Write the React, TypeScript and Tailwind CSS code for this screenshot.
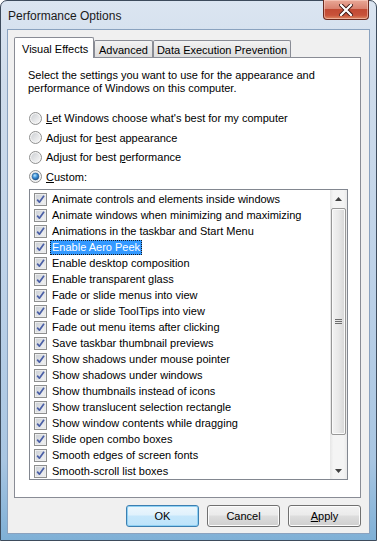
import React from "react";

const items = [
  "Animate controls and elements inside windows",
  "Animate windows when minimizing and maximizing",
  "Animations in the taskbar and Start Menu",
  "Enable Aero Peek",
  "Enable desktop composition",
  "Enable transparent glass",
  "Fade or slide menus into view",
  "Fade or slide ToolTips into view",
  "Fade out menu items after clicking",
  "Save taskbar thumbnail previews",
  "Show shadows under mouse pointer",
  "Show shadows under windows",
  "Show thumbnails instead of icons",
  "Show translucent selection rectangle",
  "Show window contents while dragging",
  "Slide open combo boxes",
  "Smooth edges of screen fonts",
  "Smooth-scroll list boxes",
];

function CheckBox() {
  return (
    <svg width="13" height="13" viewBox="0 0 13 13" className="shrink-0">
      <defs>
        <linearGradient id="cbg" x1="0" y1="0" x2="1" y2="1">
          <stop offset="0" stopColor="#cbcfd5" />
          <stop offset="1" stopColor="#f6f6f6" />
        </linearGradient>
      </defs>
      <rect x="0.5" y="0.5" width="12" height="12" fill="#f4f4f4" stroke="#8e8f8f" />
      <rect x="2" y="2" width="9" height="9" fill="url(#cbg)" stroke="#d6d9de" strokeWidth="0.6" />
      <path d="M3.2 6.6 L5.4 9.2 L10 2.8" fill="none" stroke="#4a5fa6" strokeWidth="1.7" strokeLinejoin="round" />
    </svg>
  );
}

function Radio({ checked = false }: { checked?: boolean }) {
  return (
    <svg width="13" height="13" viewBox="0 0 13 13" className="shrink-0">
      <defs>
        <linearGradient id="rbg" x1="0" y1="0" x2="1" y2="1">
          <stop offset="0" stopColor="#cdd0d4" />
          <stop offset="1" stopColor="#f7f7f7" />
        </linearGradient>
        <radialGradient id="rdot" cx="0.4" cy="0.35" r="0.7">
          <stop offset="0" stopColor="#b8e4fc" />
          <stop offset="0.5" stopColor="#3a8fd8" />
          <stop offset="1" stopColor="#194e86" />
        </radialGradient>
      </defs>
      <circle cx="6.5" cy="6.5" r="6" fill="#f4f4f4" stroke="#8e8f8f" />
      <circle cx="6.5" cy="6.5" r="4.4" fill="url(#rbg)" />
      {checked && <circle cx="6.5" cy="6.5" r="3.4" fill="url(#rdot)" stroke="#1d4f82" strokeWidth="0.5" />}
    </svg>
  );
}

function RadioRow({ children, checked }: { children: React.ReactNode; checked?: boolean }) {
  return (
    <div className="flex h-[19.5px] items-center gap-[4px]">
      <Radio checked={checked} />
      <span>{children}</span>
    </div>
  );
}

function Button({ children, primary }: { children: React.ReactNode; primary?: boolean }) {
  return (
    <div
      className={
        primary
          ? "flex h-[22px] w-[73px] items-center justify-center rounded-[3px] border border-[#3c7fb1] bg-[linear-gradient(#ecf7fd_0%,#e0f1fc_45%,#c6e7fb_50%,#bde3fa_100%)] shadow-[inset_0_0_0_1px_#8fd1f4]"
          : "flex h-[22px] w-[73px] items-center justify-center rounded-[3px] border border-[#707070] bg-[linear-gradient(#f2f2f2_0%,#ebebeb_45%,#dddddd_50%,#cfcfcf_100%)] shadow-[inset_0_0_0_1px_#fcfcfc]"
      }
    >
      {children}
    </div>
  );
}

export default function App() {
  return (
    <div className="h-[541px] w-[377px] overflow-hidden bg-white font-['Liberation_Sans',Arial,sans-serif] text-[11px] text-black">
      <div className="flex h-full w-full flex-col rounded-t-[7px] border border-[#3d4b5c] bg-[linear-gradient(#dbe5f1_0%,#cfdceb_15%,#bed2e8_50%,#a9c6e2_85%,#7fb0d6_100%)] px-[7px] pb-[7px]">
        {/* title bar */}
        <div className="flex h-[29px] shrink-0 items-start justify-between">
          <div className="mt-[8px] text-[12px] leading-[14px] text-[#1a1a1a]">Performance Options</div>
          <div className="-mt-px flex h-[20px] w-[46px] items-center justify-center rounded-b-[4px] border border-t-0 border-[#6b2a1f] bg-[linear-gradient(#e9a897_0%,#d98270_45%,#c24a33_50%,#c8523a_80%,#de8a63_100%)] shadow-[inset_0_0_0_1px_rgba(255,220,210,0.5)]">
            <svg width="14" height="12" viewBox="0 0 14 12">
              <path d="M2 1 L12 11 M12 1 L2 11" stroke="#3b1510" strokeWidth="4" strokeLinecap="square" />
              <path d="M2 1 L12 11 M12 1 L2 11" stroke="#ffffff" strokeWidth="2.2" strokeLinecap="square" />
            </svg>
          </div>
        </div>

        {/* client */}
        <div className="flex flex-1 flex-col bg-[#f0f0f0] pl-[6px] pr-[8px] pt-[7px] shadow-[0_0_0_1px_#8aa2bf]">
          {/* tabs */}
          <div className="-mb-px flex h-[21px] items-end">
            <div className="relative z-10 flex h-[21px] w-[80px] items-start rounded-t-[2px] border border-b-0 border-[#898c95] bg-white pl-[7px] pt-[3px]">
              Visual Effects
            </div>
            <div className="flex h-[18px] w-[59px] items-center justify-center rounded-t-[2px] border border-b-0 border-[#898c95] bg-[linear-gradient(#f3f3f3,#e6e6e6_50%,#dcdcdc)] pt-px">
              Advanced
            </div>
            <div className="flex h-[18px] w-[138px] items-center justify-center rounded-t-[2px] border border-b-0 border-[#898c95] bg-[linear-gradient(#f3f3f3,#e6e6e6_50%,#dcdcdc)] pt-px">
              Data Execution Prevention
            </div>
          </div>

          {/* panel */}
          <div className="flex h-[441px] flex-col border border-[#898c95] bg-white pl-[14px] pr-[12px]">
            <div className="-ml-px mt-[11px] leading-[13px]">
              Select the settings you want to use for the appearance and
              <br />
              performance of Windows on this computer.
            </div>

            <div className="mt-[13.5px] flex flex-col">
              <RadioRow>
                <span className="underline">L</span>et Windows choose what's best for my computer
              </RadioRow>
              <RadioRow>
                Adjust for <span className="underline">b</span>est appearance
              </RadioRow>
              <RadioRow>
                Adjust for best <span className="underline">p</span>erformance
              </RadioRow>
              <RadioRow checked>
                <span className="underline">C</span>ustom:
              </RadioRow>
            </div>

            {/* list box */}
            <div className="mt-[2.5px] flex h-[291px] border border-[#828790] bg-white">
              <div className="flex flex-1 flex-col pt-px">
                {items.map((item) => {
                  const selected = item === "Enable Aero Peek";
                  return (
                    <div className="flex h-[16px] items-center pl-[4px]" key={item}>
                      <CheckBox />
                      <span
                        className={
                          selected
                            ? "ml-[3px] border border-dotted border-[#1a1a1a] bg-[#3399ff] px-px leading-[13px] text-white"
                            : "ml-[3px] border border-transparent px-px leading-[13px]"
                        }
                      >
                        {item}
                      </span>
                    </div>
                  );
                })}
              </div>

              {/* scrollbar */}
              <div className="flex w-[17px] flex-col bg-[linear-gradient(90deg,#e6e6e6,#f4f4f4_20%,#f4f4f4_80%,#e9e9e9)]">
                <div className="flex h-[17px] items-center justify-center">
                  <svg width="7" height="4" viewBox="0 0 7 4">
                    <path d="M0 4 L3.5 0 L7 4 Z" fill="#404040" />
                  </svg>
                </div>
                <div className="mx-px mt-px flex h-[227px] items-center justify-center rounded-[2px] border border-[#979797] bg-[linear-gradient(90deg,#f3f3f3,#e8e8e8_50%,#d6d6d6)] shadow-[inset_0_0_0_1px_#fafafa]">
                  <svg width="7" height="7" viewBox="0 0 7 7">
                    <path d="M0 1.5 H7 M0 3.5 H7 M0 5.5 H7" stroke="#6d6d6d" strokeWidth="1" />
                  </svg>
                </div>
                <div className="flex-1" />
                <div className="flex h-[17px] items-center justify-center">
                  <svg width="7" height="4" viewBox="0 0 7 4">
                    <path d="M0 0 L3.5 4 L7 0 Z" fill="#404040" />
                  </svg>
                </div>
              </div>
            </div>
          </div>

          {/* buttons */}
          <div className="mt-[7px] flex justify-end gap-[8px]">
            <Button primary>OK</Button>
            <Button>Cancel</Button>
            <Button>
              <span>
                <span className="underline">A</span>pply
              </span>
            </Button>
          </div>
        </div>
      </div>
    </div>
  );
}
